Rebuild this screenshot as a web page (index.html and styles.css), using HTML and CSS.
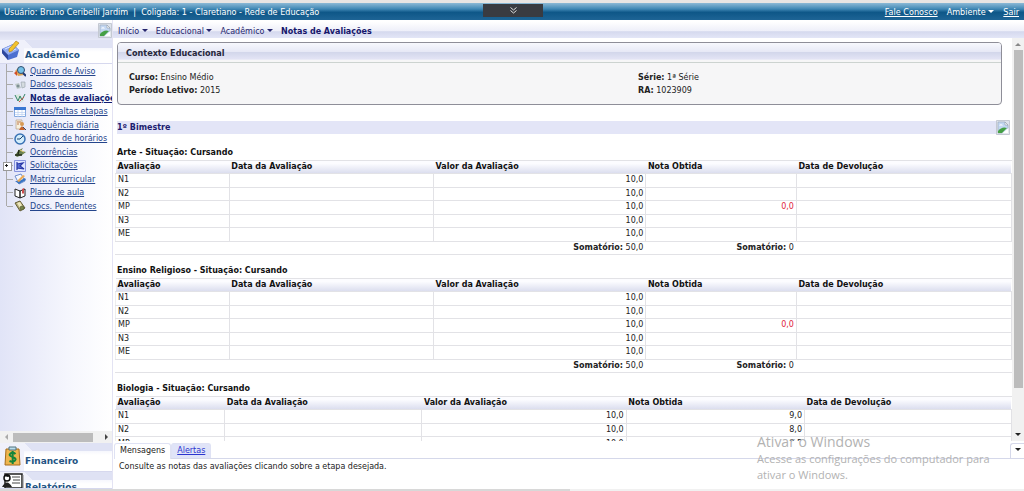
FILE: index.html
```
<!DOCTYPE html>
<html lang="pt-BR">
<head>
<meta charset="utf-8">
<title>Notas de Avaliações</title>
<link rel="stylesheet" href="styles.css">
</head>
<body>
<svg class="defs" aria-hidden="true">
  <symbol id="broken" viewBox="0 0 14 15">
    <path d="M.5 14.500V.5H13.500V14.500Z" fill="#dde3ec" stroke="#c4c9d2"/>
    <path d="M2 2H9L12 5V13H2Z" fill="#c3d7f2" stroke="#98a5b5" stroke-width=".6"/>
    <path d="M9 2V5H12Z" fill="#fff" stroke="#8e9aa8" stroke-width=".6"/>
    <path d="M3 5.500Q5 3 7 5.500Z" fill="#fff"/>
    <path d="M2 13V11Q6 6 11 8L6 13Z" fill="#45a044"/>
    <path d="M6 13.500L12.500 8V13.500Z" fill="#fff"/>
  </symbol>
</svg>
<div class="strip"></div>
<header class="top">
  <span class="user">Usuário: Bruno Ceribelli Jardim &nbsp;|&nbsp; Coligada: 1 - Claretiano - Rede de Educação</span>
  <nav class="top-links">
    <a href="#">Fale Conosco</a>
    <button class="env" type="button">Ambiente <i class="caret"></i></button>
    <a href="#">Sair</a>
  </nav>
  <button class="pull" type="button" aria-label="Expandir">
    <svg width="7" height="7" viewBox="0 0 7 7" fill="none" stroke="#ddd"><path d="M.5 .5L3.500 3L6.500 .5M.5 3.500L3.500 6L6.500 3.500"/></svg>
  </button>
</header>
<div class="layout">
  <aside class="side">
    <div class="side-bar"><svg class="broken"><use href="#broken"/></svg></div>
    <section class="group">
      <svg class="group-icon" viewBox="0 0 20 20"><path d="M1 9L12 4L18 10L16 17L7 20L1 13Z" fill="#4c6fd0"/><path d="M1 9L12 4L18 10L7 15Z" fill="#8faaf0"/><path d="M1 9L7 15V20L1 13Z" fill="#2e479c"/><path d="M4 9L11 6M7 12L15 9" stroke="#dde6ff"/><path d="M8 9L15 1L18 3L11 11L8 12Z" fill="#f3c32c" stroke="#a87912" stroke-width=".6"/></svg>
      <h2>Acadêmico</h2>
    </section>
    <ul class="tree">
      <li><svg viewBox="0 0 12 12"><path d="M1 6L5 2L10 5V10L4 11Z" fill="#dca457"/><path d="M0 8L3 6V11Z" fill="#d34c25"/><circle cx="7" cy="5" r="3.500" fill="#75c0e8" stroke="#315070"/><path d="M9 8L12 11" stroke="#223a75" stroke-width="2"/></svg><a href="#">Quadro de Aviso</a></li>
      <li><svg viewBox="0 0 12 12"><path d="M1 5L5 4L7 9L3 10Z" fill="#bfc9ca"/><path d="M7 3H11V8L8 9Z" fill="#d5dbe0" stroke="#94a0a8" stroke-width=".6"/><circle cx="4" cy="7" r="1.500" fill="#7f9194"/></svg><a href="#">Dados pessoais</a></li>
      <li><svg viewBox="0 0 12 12"><path d="M1 3L6 2L10 9L5 11Z" fill="#d7e5dd"/><path d="M1 3L4 9L6 4L8 8L11 2" stroke="#338466" fill="none"/><path d="M5 10L10 5" stroke="#c55348"/></svg><a href="#" class="current">Notas de avaliações</a></li>
      <li><svg viewBox="0 0 12 12"><path d="M.5 1.500H11.500V10.500H.5Z" fill="#fff" stroke="#84a9df"/><path d="M0 1H12V4H0Z" fill="#3977d2"/><path d="M4 4V11M8 4V11M1 6.500H11M1 8.500H11" stroke="#bad0f1" stroke-width=".7"/></svg><a href="#">Notas/faltas etapas</a></li>
      <li><svg viewBox="0 0 12 12"><path d="M2 1H8V10H2Z" fill="#f8f0dc" stroke="#ac967a" stroke-width=".6"/><path d="M3 3H7M3 5H5" stroke="#bb774c"/><circle cx="8" cy="5" r="2" fill="#d79a54"/><path d="M5 11Q8 4 11 11Z" fill="#c7632b"/><path d="M9 8L12 11" stroke="#3c4967"/></svg><a href="#">Frequência diária</a></li>
      <li><svg viewBox="0 0 12 12"><circle cx="6" cy="6" r="5" fill="#d3edfb" stroke="#3972b4" stroke-width="1.500"/><path d="M6 6L9 3M6 6H3" stroke="#1c4270"/></svg><a href="#">Quadro de horários</a></li>
      <li><svg viewBox="0 0 12 12"><path d="M1 9L5 4L9 2L7 5L12 6L8 9L3 11Z" fill="#6b8250"/><path d="M1 9H8M5 4L4 8" stroke="#222b18" stroke-width="1.500"/><path d="M6 4L10 6" stroke="#dfc569"/></svg><a href="#">Ocorrências</a></li>
      <li class="branch"><svg viewBox="0 0 12 12"><path d="M.5 .5H11.500V11.500H.5Z" fill="#dfe5ff" stroke="#8794dd"/><path d="M3 2V10M3 4L9 3L6 6L10 9L3 8" stroke="#2938a7" stroke-width="1.200" fill="#5a70d6"/></svg><a href="#">Solicitações</a></li>
      <li><svg viewBox="0 0 12 12"><path d="M1 3L7 1L11 8L5 11Z" fill="#f5f8ff" stroke="#6e8ecc"/><path d="M1 8L5 11L12 7L11 5L5 8Z" fill="#3975c4"/><path d="M3 8L9 2L11 3L5 9Z" fill="#ecaa54"/></svg><a href="#">Matriz curricular</a></li>
      <li><svg viewBox="0 0 12 12"><path d="M1 2L6 4V11L1 9ZM11 2L6 4V11L11 9Z" fill="#fff" stroke="#222"/><path d="M8 2V7L9 6L10 7V1" fill="#cc4c4c"/></svg><a href="#">Plano de aula</a></li>
      <li><svg viewBox="0 0 12 12"><path d="M1 3L6 1L11 8L6 11Z" fill="#b4ab79" stroke="#635c35"/><path d="M3 3L6 2L9 7L6 8Z" fill="#ede8bd"/><circle cx="8" cy="8" r="2" fill="#74824a" stroke="#464e2c" stroke-width=".6"/></svg><a href="#">Docs. Pendentes</a></li>
    </ul>
    <div class="hscroll"><i class="arrow-left"></i><span></span><i class="arrow-right"></i></div>
    <section class="group">
      <svg class="group-icon" viewBox="0 0 20 20"><path d="M5 3H18L19 19H4Z" fill="#efb64e" stroke="#a66c1c"/><path d="M8 4V1H15V4Z" fill="#b9dceb" stroke="#53727f"/><path d="M14.500 8Q12 5.500 9.500 7.500T11.500 11T14 14.500T8.500 15M11.700 5V18" fill="none" stroke="#16853a" stroke-width="2"/></svg>
      <h2>Financeiro</h2>
    </section>
    <section class="group last">
      <svg class="group-icon wide" viewBox="0 0 23 18"><path d="M4 2H21V16H4Z" fill="#fff" stroke="#222" stroke-width="1.500"/><path d="M22 3V17H5" stroke="#888" fill="none"/><path d="M11 5H19M12 8H19M11 11H19" stroke="#444"/><circle cx="6" cy="6" r="3" fill="#fff" stroke="#111" stroke-width="1.500"/><path d="M3 4Q6 0 9 4L7 5Z" fill="#111"/><path d="M1 15Q6 6 11 15Z" fill="#222"/></svg>
      <h2>Relatórios</h2>
    </section>
  </aside>
  <main class="main">
    <nav class="crumbs">
      <button type="button">Início <i class="caret"></i></button>
      <button type="button">Educacional <i class="caret"></i></button>
      <button type="button">Acadêmico <i class="caret"></i></button>
      <strong>Notas de Avaliações</strong>
    </nav>
    <div class="view">
      <div class="content">
        <section class="context">
          <h1>Contexto Educacional</h1>
          <div class="facts">
            <div><b>Curso:</b> Ensino Médio</div>
            <div><b>Série:</b> 1ª Série</div>
            <div><b>Período Letivo:</b> 2015</div>
            <div><b>RA:</b> 1023909</div>
          </div>
        </section>
        <div class="term"><h2>1º Bimestre</h2><svg class="broken"><use href="#broken"/></svg></div>
        <table>
          <caption>Arte - Situação: Cursando</caption>
          <colgroup><col class="a1"><col class="a2"><col class="a3"><col class="a4"><col></colgroup>
          <thead><tr><th>Avaliação</th><th>Data da Avaliação</th><th>Valor da Avaliação</th><th>Nota Obtida</th><th>Data de Devolução</th></tr></thead>
          <tbody>
            <tr><td>N1</td><td></td><td>10,0</td><td></td><td></td></tr>
            <tr><td>N2</td><td></td><td>10,0</td><td></td><td></td></tr>
            <tr><td>MP</td><td></td><td>10,0</td><td class="low">0,0</td><td></td></tr>
            <tr><td>N3</td><td></td><td>10,0</td><td></td><td></td></tr>
            <tr><td>ME</td><td></td><td>10,0</td><td></td><td></td></tr>
            <tr class="sum"><td></td><td></td><td><b>Somatório:</b> 50,0</td><td><b>Somatório:</b> 0</td><td></td></tr>
          </tbody>
        </table>
        <table>
          <caption>Ensino Religioso - Situação: Cursando</caption>
          <colgroup><col class="a1"><col class="a2"><col class="a3"><col class="a4"><col></colgroup>
          <thead><tr><th>Avaliação</th><th>Data da Avaliação</th><th>Valor da Avaliação</th><th>Nota Obtida</th><th>Data de Devolução</th></tr></thead>
          <tbody>
            <tr><td>N1</td><td></td><td>10,0</td><td></td><td></td></tr>
            <tr><td>N2</td><td></td><td>10,0</td><td></td><td></td></tr>
            <tr><td>MP</td><td></td><td>10,0</td><td class="low">0,0</td><td></td></tr>
            <tr><td>N3</td><td></td><td>10,0</td><td></td><td></td></tr>
            <tr><td>ME</td><td></td><td>10,0</td><td></td><td></td></tr>
            <tr class="sum"><td></td><td></td><td><b>Somatório:</b> 50,0</td><td><b>Somatório:</b> 0</td><td></td></tr>
          </tbody>
        </table>
        <table class="short">
          <caption>Biologia - Situação: Cursando</caption>
          <colgroup><col class="b1"><col class="b2"><col class="b3"><col class="b4"><col></colgroup>
          <thead><tr><th>Avaliação</th><th>Data da Avaliação</th><th>Valor da Avaliação</th><th>Nota Obtida</th><th>Data de Devolução</th></tr></thead>
          <tbody>
            <tr><td>N1</td><td></td><td>10,0</td><td>9,0</td><td></td></tr>
            <tr><td>N2</td><td></td><td>10,0</td><td>8,0</td><td></td></tr>
            <tr><td>MP</td><td></td><td>10,0</td><td>8,5</td><td></td></tr>
          </tbody>
        </table>
      </div>
      <div class="vscroll"><i class="arrow-up"></i><span></span><i class="caret"></i></div>
    </div>
    <section class="messages">
      <div class="tabs">
        <span class="tab active">Mensagens</span><a class="tab" href="#">Alertas</a>
        <button class="collapse" type="button" aria-label="Recolher"><i class="caret"></i></button>
      </div>
      <p>Consulte as notas das avaliações clicando sobre a etapa desejada.</p>
    </section>
  </main>
</div>
<footer class="status"><div></div></footer>
<div class="watermark"><strong>Ativar o Windows</strong><p>Acesse as configurações do computador para ativar o Windows.</p></div>
</body>
</html>
```
FILE: styles.css
```
* { box-sizing: border-box; }
body {
  margin: 0;
  height: 100vh;
  display: flex;
  flex-direction: column;
  overflow: hidden;
  background: #fff;
  color: #222;
  font: 8px/13px "DejaVu Sans", Verdana, sans-serif;
}
h1, h2, p, ul { margin: 0; padding: 0; }
button { padding: 0; border: 0; background: none; font: inherit; color: inherit; }
.defs { display: none; }
.broken { width: 14px; height: 15px; flex: none; }
.caret {
  display: inline-block;
  border: solid transparent;
  border-width: 3px 3px 0;
  border-top-color: currentColor;
  vertical-align: 2px;
}

.strip { flex: none; height: 3px; background: #e8e5e3; }
.top {
  position: relative;
  flex: none;
  height: 17px;
  display: flex;
  align-items: center;
  justify-content: space-between;
  padding: 2px 5px 0 4px;
  background: linear-gradient(#8cb9d6, #4088b5 35%, #0e5788 55%, #1e6495);
  color: #fff;
  font: 9px/13px "DejaVu Sans Condensed", Tahoma, sans-serif;
}
.top a { color: #fff; }
.top-links { display: flex; gap: 9px; }
.pull {
  position: absolute;
  top: 1px;
  left: 483px;
  width: 60px;
  height: 13px;
  display: grid;
  place-items: center;
  background: #393b41;
}

.layout { flex: 1; min-height: 0; display: grid; grid-template-columns: 113px minmax(0, 1fr); }
.side {
  display: flex;
  flex-direction: column;
  min-height: 0;
  overflow: hidden;
  border-right: 1px solid #e3e3f3;
}
.side-bar {
  flex: none;
  height: 20px;
  display: flex;
  justify-content: flex-end;
  align-items: center;
  background: linear-gradient(#fff, #eeeff9 55%, #d5d8ec 60%, #e6e8f7);
}
.group {
  flex: none;
  height: 24px;
  display: flex;
  align-items: flex-start;
  gap: 4px;
  padding-left: 1px;
  border-bottom: 1px solid #d6d8ee;
  background:
    linear-gradient(45deg, #f0f1fb 50%, transparent 50%) 24px 0 / 8px 8px no-repeat,
    linear-gradient(#f0f1fb, #f0f1fb) 0 0 / 24px 100% no-repeat,
    linear-gradient(#dfe2f4 8px, #f6f7fd 8px, #fff 12px);
}
.group-icon { width: 20px; height: 20px; flex: none; }
.group-icon.wide { width: 23px; height: 18px; margin-right: -3px; }
.group h2 { margin-top: 9px; color: #235383; font: bold 9px/13px "DejaVu Sans", Verdana, sans-serif; }
.tree {
  flex: 1;
  display: flex;
  flex-direction: column;
  padding-left: 6px;
  list-style: none;
  background: linear-gradient(90deg, #e1e4f7, #f5f6fd 60%, #fff);
}
.tree li {
  position: relative;
  flex: 0 1 14px;
  display: flex;
  align-items: center;
  gap: 4px;
  padding-left: 8px;
  white-space: nowrap;
  background: linear-gradient(#aaa, #aaa) 1px 50% / 6px 1px no-repeat, linear-gradient(#aaa, #aaa) 0 0 / 1px 100% no-repeat;
}
.tree li:nth-child(even) { flex-basis: 13px; }
.tree li:last-child { background-size: 6px 1px, 1px 50%; }
.tree svg { width: 12px; height: 12px; flex: none; }
.tree a { color: #24458c; }
.tree .current { color: #101c72; font-weight: bold; }
.branch::before {
  content: "";
  position: absolute;
  left: -3px;
  top: 3px;
  width: 7px;
  height: 7px;
  border: 1px solid #999;
  background:
    linear-gradient(#222, #222) 1px 2px / 3px 1px no-repeat,
    linear-gradient(#222, #222) 2px 1px / 1px 3px no-repeat,
    #fff;
}
.hscroll {
  flex: none;
  height: 12px;
  display: flex;
  align-items: center;
  justify-content: space-between;
  padding: 0 4px 0 5px;
  background: #f1f1f1;
}
.hscroll span { width: 80px; height: 9px; margin-right: 7px; background: #bcbcbc; }
.arrow-left, .arrow-right { border: solid transparent; }
.arrow-left { border-width: 3px 3px 3px 0; border-right-color: #aaa; }
.arrow-right { border-width: 3px 0 3px 3px; border-left-color: #444; }
.hscroll + .group { height: 29px; padding-top: 3px; }
.last { height: 17px; overflow: hidden; }

.main { display: flex; flex-direction: column; min-width: 0; min-height: 0; }
.crumbs {
  flex: none;
  height: 18px;
  display: flex;
  align-items: center;
  gap: 8px;
  padding: 5px 5px 0;
  background: linear-gradient(#fff 10%, #eeeff9 60%, #d5d9ee 65%, #e3e6f7);
  color: #26266e;
  line-height: 13px;
}
.crumbs strong { color: #16166b; }
.view { flex: 1; min-height: 0; display: flex; padding-left: 2px; }
.content { flex: 1; min-width: 0; overflow: hidden; padding-top: 4px; }
.context {
  margin: 0 10px 0 2px;
  height: 63px;
  border: 1px solid #8e8e98;
  border-radius: 4px;
  background: #f6f6f7;
  overflow: hidden;
}
.context h1 {
  height: 20px;
  padding: 4px 8px 0;
  border-bottom: 1px solid #ccd3d0;
  background: linear-gradient(#f7f8fd, #e7e9f6 45%, #d3d7eb 50%, #e3e4f5 85%, #f6f6f7 90%);
  color: #27273b;
  font: bold 9px/13px "DejaVu Sans Condensed", Tahoma, sans-serif;
}
.facts { display: grid; grid-template-columns: 509px 1fr; padding: 8px 11px; }
.term {
  display: flex;
  justify-content: space-between;
  align-items: center;
  height: 15px;
  margin: 15px 2px 11px 2px;
  background: linear-gradient(#e3e5f7, #e3e5f7) 0 1px / 100% 13px no-repeat;
}
.term h2 { color: #1c1c70; font-size: 8px; line-height: 13px; }

table { width: 100%; height: 95px; margin-bottom: 9px; border-collapse: collapse; table-layout: fixed; }
caption { padding: 0 2px; height: 14px; line-height: 14px; text-align: left; font-weight: bold; color: #111; }
th, td { height: 13px; padding: 0 2px; border: 1px solid #e2e2e6; line-height: 12px; }
th { border-width: 1px 0; text-align: left; color: #111; }
thead tr { background: linear-gradient(#fcfcff 20%, #d8dbed); }
td:nth-child(3), td:nth-child(4) { text-align: right; }
td:first-child { border-left-color: #eee; }
.sum td { border-left-color: transparent; border-right-color: transparent; }
.low { color: #e0243c; }
.short { height: 55px; }
.a1 { width: 12.7%; }
.a2 { width: 22.8%; }
.a3 { width: 23.7%; }
.a4 { width: 16.8%; }
.b1 { width: 12.2%; }
.b2 { width: 22%; }
.b3 { width: 22.8%; }
.b4 { width: 19.9%; }

.vscroll {
  flex: none;
  width: 12px;
  display: flex;
  flex-direction: column;
  align-items: center;
  gap: 4px;
  padding: 5px 0;
  background: #f1f1f1;
}
.vscroll span { flex: 0 0 338px; width: 9px; background: #bcbcbc; }
.vscroll .caret { margin-top: auto; }
.arrow-up { border: solid transparent; border-width: 0 3px 3px; border-bottom-color: #888; }

.messages { flex: none; height: 48px; padding-left: 1px; }
.tabs {
  display: flex;
  height: 18px;
  padding-top: 2px;
  border-bottom: 1px solid #d5d8ea;
}
.tab { height: 15px; padding: 0 5px; color: #222; border: 1px solid #dfe2f4; border-bottom: 0; border-radius: 3px 3px 0 0; }
.tab.active { height: 16px; background: #fff; }
a.tab { background: #e0e4f8; color: #2c35cf; }
.collapse {
  width: 14px;
  height: 15px;
  margin-left: auto;
  border: 1px solid #d5d8ea;
  border-width: 1px 0 0 1px;
  border-radius: 3px 0 0;
  line-height: 8px;
}
.messages p { padding: 1px 5px; line-height: 13px; }
.status { flex: none; height: 2px; background: #f1f1f1; }
.status div { width: 570px; height: 2px; background: #d8d8d8; }
.watermark {
  position: absolute;
  left: 757px;
  top: 433px;
  width: 240px;
  color: #b2b2b2;
  font: 11px/16px "Open Sans", "Segoe UI", sans-serif;
  pointer-events: none;
}
.watermark strong { font-size: 14px; font-weight: 400; line-height: 17px; }
```
